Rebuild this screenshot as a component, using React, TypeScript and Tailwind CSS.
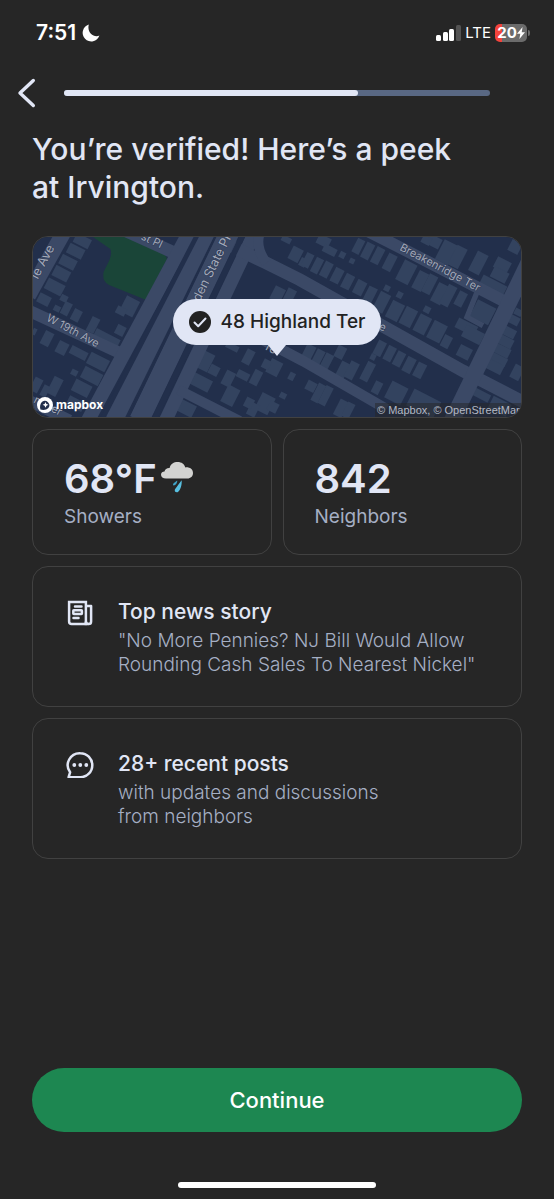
import type { ReactNode } from 'react';

type Block = [x: number, y: number, w: number, h: number];

// Houses by street block: centre x, centre y, width, height
const westHouses: Block[] = [
  [148, 12, 50, 30], [128, 43, 50, 32], [105, 76, 50, 32], [85, 110, 50, 34], [65, 150, 56, 36],
  [33, 188, 38, 30], [93, 184, 22, 20], [72, 215, 20, 18], [100, 215, 24, 40], [130, 235, 26, 36],
  [180, 264, 26, 48], [290, 208, 44, 52], [264, 222, 30, 24], [262, 280, 28, 30], [222, 302, 80, 24],
  [4, 284, 12, 20], [42, 305, 28, 44], [87, 333, 32, 38], [137, 348, 54, 26], [195, 375, 62, 38],
  [176, 417, 60, 38], [124, 407, 20, 18], [146, 454, 54, 38], [66, 448, 30, 56], [36, 462, 20, 36],
  [10, 444, 26, 44], [128, 500, 52, 30],
];

const middleHouses: Block[] = [
  [516, 372, 42, 56], [543, 400, 30, 30], [504, 436, 62, 38], [586, 425, 30, 46], [592, 476, 40, 56],
  [630, 415, 38, 24], [646, 360, 26, 46], [669, 422, 26, 46], [724, 392, 38, 46], [700, 382, 24, 28],
  [776, 418, 18, 24], [750, 476, 20, 18], [696, 500, 44, 56], [660, 518, 28, 40], [648, 498, 26, 30],
  [720, 510, 30, 30], [460, 514, 52, 38], [734, 172, 34, 44], [768, 180, 28, 52], [788, 52, 34, 42],
  [810, 76, 20, 26], [760, 8, 30, 18], [598, 330, 40, 18],
];

const eastHouses: Block[] = [
  [872, 12, 40, 30], [890, 40, 42, 24], [928, 54, 18, 20], [957, 72, 16, 16], [824, 70, 24, 44],
  [852, 86, 24, 48], [880, 98, 26, 48], [912, 116, 28, 46], [944, 134, 28, 46], [980, 152, 30, 44],
  [1012, 172, 28, 46], [1046, 196, 34, 60], [1086, 222, 40, 56], [1126, 240, 38, 56], [1168, 262, 38, 56],
  [1212, 284, 44, 58], [1240, 314, 26, 38], [1294, 346, 40, 36], [1062, 154, 18, 18], [1100, 174, 18, 20],
  [1182, 218, 20, 20], [976, 28, 24, 46], [1004, 42, 26, 50], [1034, 56, 26, 52], [1070, 76, 28, 52],
  [1120, 106, 42, 66], [1162, 132, 32, 58], [1190, 142, 28, 60], [1220, 170, 34, 62], [1246, 176, 28, 66],
  [1283, 186, 26, 46], [1240, 46, 44, 66], [1274, 60, 34, 66], [1336, 78, 36, 66], [1204, 14, 40, 32],
  [1180, 10, 28, 24], [1408, 84, 46, 36], [1400, 114, 50, 34], [1380, 146, 80, 34], [1446, 30, 34, 36],
  [1350, 226, 62, 56], [1300, 270, 64, 32], [1320, 294, 62, 38], [1424, 284, 50, 28], [1414, 312, 54, 30],
  [1404, 340, 56, 30], [1394, 366, 58, 26], [1382, 388, 58, 30], [1444, 250, 30, 26], [1452, 406, 30, 44],
  [1456, 226, 24, 20],
];

const southHouses: Block[] = [
  [826, 348, 30, 50], [856, 360, 26, 46], [882, 372, 26, 46], [922, 346, 28, 38], [928, 402, 28, 56],
  [956, 400, 28, 54], [1004, 404, 26, 60], [1020, 360, 16, 18], [1040, 334, 26, 46], [1070, 350, 26, 46],
  [1098, 366, 26, 46], [1128, 384, 28, 48], [1160, 400, 28, 46], [1032, 452, 24, 38], [1090, 468, 54, 56],
  [834, 448, 30, 30], [856, 468, 24, 58], [878, 476, 24, 60], [924, 514, 28, 52], [946, 520, 24, 48],
  [1172, 500, 90, 56], [1345, 474, 54, 24], [1400, 508, 60, 40],
];

function Houses({ blocks }: { blocks: Block[] }) {
  return (
    <g fill="#33435f">
      {blocks.map(([x, y, w, h]) => (
        <rect
          key={`${x}-${y}`}
          x={x - w / 2}
          y={y - h / 2}
          width={w}
          height={h}
          transform={`rotate(27 ${x} ${y})`}
        />
      ))}
    </g>
  );
}

function StreetMap() {
  return (
    <svg
      viewBox="0 0 1464 540"
      preserveAspectRatio="xMidYMid slice"
      className="absolute inset-0 h-full w-full"
      aria-hidden="true"
    >
      <rect width="1464" height="540" fill="#222f4b" />
      <path d="M180 0 L232 36 Q238 50 228 72 L212 104 Q206 132 228 144 L338 188 L402 66 L392 44 L290 0 Z" fill="#1a4538" />

      <Houses blocks={westHouses} />
      <Houses blocks={middleHouses} />
      <Houses blocks={eastHouses} />
      <Houses blocks={southHouses} />

      {/* Streets */}
      <g fill="none" stroke="#3b4966">
        <path d="M92 -14 L-14 176" strokeWidth="46" />
        <path d="M-10 222 L270 352" strokeWidth="36" />
        <path d="M-10 492 L110 550" strokeWidth="34" />
        <path d="M262 -26 L430 50" strokeWidth="38" />
        <path d="M472 -20 L165 550" strokeWidth="42" />
        <path d="M522 -20 L242 550" strokeWidth="54" />
        <path d="M592 -20 L318 550" strokeWidth="60" />
        <path d="M668 -20 L398 550" strokeWidth="40" />
        <path d="M600 30 Q640 50 700 78 L800 128 L1290 402 L1480 500" strokeWidth="38" />
        <path d="M680 -10 Q666 30 700 78" strokeWidth="30" />
        <path d="M560 240 L810 372 L1060 516" strokeWidth="32" />
        <path d="M436 458 L620 552" strokeWidth="30" />
        <path d="M1000 -20 L1110 36 L1420 196" strokeWidth="36" />
        <path d="M1490 70 L1252 560" strokeWidth="48" />
        <path d="M1332 166 L1302 240 L1350 266" strokeWidth="16" />
      </g>
      <g fill="none" stroke="#222f4b">
        <path d="M552 -10 L282 550" strokeWidth="5" />
        <path d="M500 -20 L206 550" strokeWidth="14" />
        <path d="M636 -20 L362 550" strokeWidth="17" />
      </g>

      {/* Street names */}
      <g fill="#a3a9b8" stroke="#2b3855" strokeWidth="3" paintOrder="stroke" fontSize="33" fontFamily="Inter, sans-serif">
        <text transform="translate(14 128) rotate(-62)" fontSize="38">ie Ave</text>
        <text transform="translate(38 250) rotate(28)">W 19th Ave</text>
        <text transform="translate(322 6) rotate(25)">st Pl</text>
        <text transform="translate(500 196) rotate(-64)" fontSize="38">den State Pkwy</text>
        <text transform="translate(1098 38) rotate(28)">Breakenridge Ter</text>
        <text transform="translate(1036 276) rotate(25)">e</text>
        <text transform="translate(690 334) rotate(28)">Te</text>
        <text transform="translate(0 496) rotate(27)">mmer</text>
      </g>
    </svg>
  );
}

function MapboxLogo() {
  return (
    <div className="absolute bottom-1 left-1 flex items-center gap-[3px] text-white">
      <svg viewBox="0 0 16 16" className="h-4 w-4" aria-hidden="true">
        <circle cx="8" cy="8" r="8" fill="#fff" />
        <path d="M3.4 12.6C2.6 9.6 3.2 6.6 5.1 4.8a4.5 4.5 0 0 1 6.3 6.3c-1.8 1.9-4.900 2.300-8 1.500z" fill="#222f4b" />
        <path d="M8.500 4.900l.9 2 2 .9-2 .9-.9 2-.9-2-2-.9 2-.9z" fill="#fff" />
      </svg>
      <span className="text-xs font-bold">mapbox</span>
    </div>
  );
}

function StatusBar() {
  return (
    <div className="flex h-[66px] items-center justify-between pr-6 pl-9 text-white">
      <div className="flex items-center gap-[6px]">
        <span className="text-[21px] font-semibold">7:51</span>
        <svg viewBox="0 0 18 18" className="size-[18px]" fill="currentColor" aria-hidden="true">
          <path d="M6.800 .6A8.600 8.600 0 1 0 17.400 11.600C11.500 14 4.700 8.200 6.800 .6z" />
        </svg>
      </div>
      <div className="flex items-center gap-1">
        <svg viewBox="0 0 25 16" className="h-4 w-[25px]" fill="currentColor" aria-hidden="true">
          <rect x="0" y="10" width="5" height="6" rx="1.500" />
          <rect x="7" y="7" width="5" height="9" rx="1.500" />
          <rect x="13" y="4" width="5" height="12" rx="1.500" />
          <rect x="20" y="0" width="5" height="16" rx="1.500" fill="#535353" />
        </svg>
        <span className="text-[15px]">LTE</span>
        <div className="flex items-center">
          <div className="flex h-[18px] w-8 items-center justify-center rounded-[5px] bg-linear-to-r from-[#f4433c] from-22% to-[#6b6b6b] to-22%">
            <span className="text-[15px] leading-4 font-bold">20</span>
            <svg viewBox="0 0 8 12" className="h-3 w-2" fill="currentColor" aria-hidden="true">
              <path d="M5.600 0L0 6.800h3.300L2.400 12 8 5.200H4.700z" />
            </svg>
          </div>
          <div className="ml-px h-[6px] w-[2px] rounded-r-full bg-[#6b6b6b]" />
        </div>
      </div>
    </div>
  );
}

function NewsIcon() {
  return (
    <svg viewBox="0 -1 28 28" className="h-7 w-7 shrink-0" fill="none" stroke="currentColor" strokeWidth="2.500" strokeLinejoin="round" aria-hidden="true">
      <path d="M3.100 3.100h16.800v21.800H5.600a2.500 2.500 0 0 1-2.500-2.500z" strokeLinejoin="miter" />
      <path d="M19.900 7.100h5.200v15.300a2.500 2.500 0 0 1-5.200 0" />
      <path d="M18.500 24.900h4" />
      <rect x="7.300" y="11.300" width="8.600" height="3.700" rx=".5" />
      <path d="M9 7.500h6.500M7.500 18.900h5" strokeLinecap="round" />
    </svg>
  );
}

function ChatIcon() {
  return (
    <svg viewBox="0 -1 28 28" className="h-7 w-7 shrink-0" fill="none" stroke="currentColor" strokeWidth="2.500" aria-hidden="true">
      <path d="M14.300 2.200a12 12 0 1 1 0 24H2.600l1.500-4.900A12 12 0 0 1 14.300 2.200z" strokeLinejoin="round" />
      <g fill="currentColor" stroke="none">
        <circle cx="8.300" cy="14" r="1.900" />
        <circle cx="14.300" cy="14" r="1.900" />
        <circle cx="20.300" cy="14" r="1.900" />
      </g>
    </svg>
  );
}

function ShowersIcon() {
  return (
    <svg viewBox="0 0 32 32" className="h-8 w-8" role="img" aria-label="Rain">
      <path d="M5 16.500C2 16.500 0 15 0 12.700c0-2 1.700-3.200 3.500-3.200C4 7 6 5.700 8.600 5.900 9.600 2 12.800 0 16.600 0c4 0 7 2.100 7.600 5.400 4.300-.5 7.800 1.700 7.800 5.600 0 3.200-2.300 5.500-5.600 5.500z" fill="#d3d3d1" />
      <path d="M16.200 18.500c.3 2-1 4.600-3.300 4.900-1.300 0-1.100-1.400-.2-2.200z" fill="#3fa3c8" />
      <path d="M20.600 18.300c.6 4-1.100 9.800-3.600 11.700-1.600.8-3.600-.2-3.200-2 .3-1.300 4-5.500 6.800-9.700z" fill="#58bfe0" />
    </svg>
  );
}

function StatCard({ value, label, icon }: { value: string; label: string; icon?: ReactNode }) {
  return (
    <div className="flex-1 rounded-2xl border border-[#414141] px-[31px] py-6">
      <div className="flex items-start gap-1">
        <span className="text-[40px] leading-[50px] font-semibold">{value}</span>
        {icon && <span className="pt-2">{icon}</span>}
      </div>
      <p className="text-[19px] leading-[26px] text-[#a5afc4]">{label}</p>
    </div>
  );
}

function InfoCard({ icon, title, children }: { icon: ReactNode; title: string; children: ReactNode }) {
  return (
    <div className="flex gap-6 rounded-2xl border border-[#414141] px-[33px] pt-[31px] pb-[29px]">
      {icon}
      <div className="flex flex-col gap-[3px]">
        <h2 className="text-[21px] leading-7 font-medium">{title}</h2>
        <p className="text-[19px] leading-6 font-[350] text-[#a5afc4]">{children}</p>
      </div>
    </div>
  );
}

export default function App() {
  return (
    <div className="flex min-h-screen flex-col bg-[#262626] font-[Inter,sans-serif] text-[#e1e6f5]">
      <StatusBar />

      <header className="flex h-[54px] items-center pr-16 pl-4">
        <button type="button" aria-label="Back" className="mr-7 w-5">
          <svg viewBox="0 0 20 30" className="h-[30px] w-5" fill="none" stroke="currentColor" strokeWidth="3.400" strokeLinecap="round" strokeLinejoin="round">
            <path d="M17.300 2.500L4 15l13.300 12.500" />
          </svg>
        </button>
        <div
          role="progressbar"
          aria-label="Sign up progress"
          aria-valuenow={69}
          className="h-[6px] flex-1 rounded-full bg-[#596883]"
        >
          <div className="h-full w-[69%] rounded-full bg-[#e1e6f5]" />
        </div>
      </header>

      <main className="flex flex-1 flex-col px-8">
        <h1 className="pt-[10px] text-[30px] leading-[38px] font-medium">
          You’re verified! Here’s a peek
          <br />
          at Irvington.
        </h1>

        <div className="mt-[30px] flex flex-col gap-[11px]">
          <div className="relative h-[182px] overflow-hidden rounded-2xl border border-[#414141]">
            <StreetMap />
            <MapboxLogo />
            <p className="absolute right-0 bottom-0 w-[146px] overflow-hidden bg-[#262626]/50 pl-[2px] font-['Liberation_Sans',sans-serif] text-[11px] leading-[14px] whitespace-nowrap text-[#b4b9c5]">
              © Mapbox, © OpenStreetMap
            </p>
            <div className="absolute inset-x-0 top-[62px] flex flex-col items-center text-[#222]">
              <div className="flex h-[46px] items-center gap-[10px] rounded-full bg-[#e1e6f5] px-4">
                <svg viewBox="0 0 22 22" className="size-[22px]" aria-hidden="true">
                  <circle cx="11" cy="11" r="11" fill="#222" />
                  <path d="M5.500 11.500l3.700 3.700 7.300-7.700" fill="none" stroke="#e1e6f5" strokeWidth="2" strokeLinecap="round" strokeLinejoin="round" />
                </svg>
                <span className="text-[19px] font-medium">48 Highland Ter</span>
              </div>
              <svg viewBox="0 0 18 11" className="h-[11px] w-[18px]" fill="#e1e6f5" aria-hidden="true">
                <path d="M0 0h18L9 11z" />
              </svg>
            </div>
          </div>

          <div className="flex gap-[11px]">
            <StatCard value="68°F" label="Showers" icon={<ShowersIcon />} />
            <StatCard value="842" label="Neighbors" />
          </div>

          <InfoCard icon={<NewsIcon />} title="Top news story">
            "No More Pennies? NJ Bill Would Allow
            <br />
            Rounding Cash Sales To Nearest Nickel"
          </InfoCard>

          <InfoCard icon={<ChatIcon />} title="28+ recent posts">
            with updates and discussions
            <br />
            from neighbors
          </InfoCard>
        </div>
      </main>

      <footer className="px-8 pb-[11px]">
        <button type="button" className="h-16 w-full rounded-full bg-[#1d8751] text-[22px] font-medium text-white">
          Continue
        </button>
        <div className="mx-auto mt-[50px] h-[6px] w-[198px] rounded-full bg-white" />
      </footer>
    </div>
  );
}
